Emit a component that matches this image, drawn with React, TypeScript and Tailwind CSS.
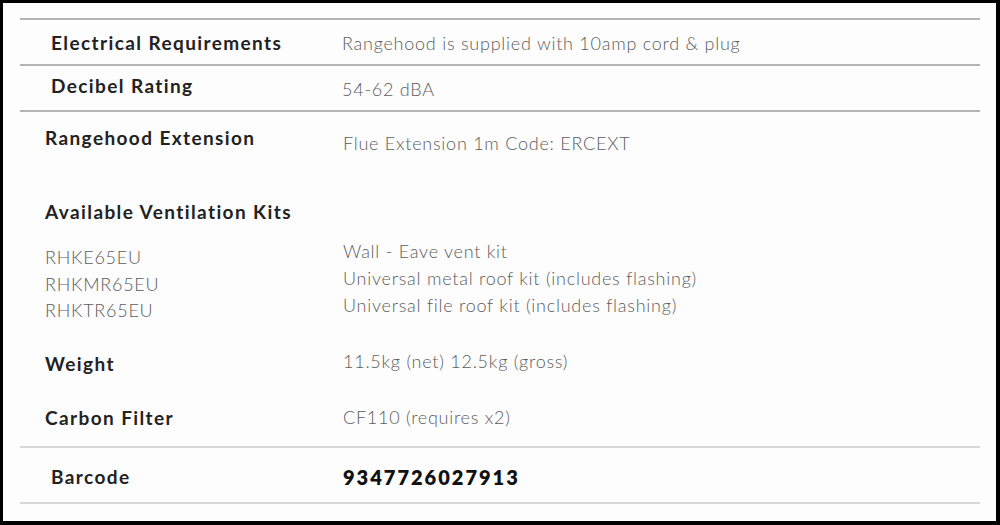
import React from "react";

const kits = [
  { code: "RHKE65EU", desc: "Wall - Eave vent kit" },
  { code: "RHKMR65EU", desc: "Universal metal roof kit (includes flashing)" },
  { code: "RHKTR65EU", desc: "Universal file roof kit (includes flashing)" },
];

const Label: React.FC<{ children: React.ReactNode; className?: string }> = ({ children, className = "" }) => (
  <span className={`shrink-0 text-[19px] leading-[24px] font-bold tracking-[1.4px] text-[#222] ${className}`}>{children}</span>
);

const Value: React.FC<{ children: React.ReactNode; className?: string }> = ({ children, className = "" }) => (
  <span className={`text-[18px] leading-[24px] font-light tracking-[0.75px] text-[#5c5c5c] ${className}`}>{children}</span>
);

export default function App() {
  return (
    <div className="w-[1000px] h-[525px] bg-black pl-[3px] pt-[3px] pr-[4px] pb-[4px]" style={{ fontFamily: "Lato, 'Liberation Sans', sans-serif" }}>
      <div className="h-full bg-[#fdfdfd] pt-[15px] pl-[17px] pr-[16px]">
        {/* Top bordered rows */}
        <div className="h-[2px] bg-[#b4b4b4]" />
        <div className="h-[44px] flex pt-[11px] pl-[31px]">
          <Label className="w-[291px]">Electrical Requirements</Label>
          <Value>Rangehood is supplied with 10amp cord &amp; plug</Value>
        </div>
        <div className="h-[2px] bg-[#b4b4b4]" />
        <div className="h-[44px] flex pt-[8px] pl-[31px]">
          <Label className="w-[291px]">Decibel Rating</Label>
          <Value className="mt-[3px]">54-62 dBA</Value>
        </div>
        <div className="h-[2px] bg-[#b4b4b4]" />

        {/* Open section */}
        <div className="h-[334px] pl-[25px] pt-[14px]">
          <div className="h-[24px] flex items-start">
            <Label className="w-[298px]">Rangehood Extension</Label>
            <Value className="mt-[5px]">Flue Extension 1m Code: ERCEXT</Value>
          </div>
          <div className="h-[24px] mt-[50px] flex items-start">
            <Label className="w-[298px]">Available Ventilation Kits</Label>
          </div>
          <div className="h-[81px] mt-[14px] flex items-start">
            <div className="w-[298px] shrink-0 mt-[6px] flex flex-col">
              {kits.map((k) => (
                <span key={k.code} className="text-[18px] leading-[26.5px] font-light tracking-[0.75px] text-[#5c5c5c]">{k.code}</span>
              ))}
            </div>
            <div className="flex flex-col">
              {kits.map((k) => (
                <span key={k.code} className="text-[18px] leading-[27px] font-light tracking-[0.75px] text-[#5c5c5c]">{k.desc}</span>
              ))}
            </div>
          </div>
          <div className="h-[24px] mt-[30px] flex items-start">
            <Label className="w-[298px] mt-[3px]">Weight</Label>
            <Value>11.5kg (net) 12.5kg (gross)</Value>
          </div>
          <div className="h-[24px] mt-[32px] flex items-start">
            <Label className="w-[298px] mt-[1px]">Carbon Filter</Label>
            <Value>CF110 (requires x2)</Value>
          </div>
        </div>

        {/* Bottom bordered row */}
        <div className="h-[2px] bg-[#d8d8d8]" />
        <div className="h-[54px] flex pt-[17px] pl-[31px]">
          <Label className="w-[292px]">Barcode</Label>
          <span className="text-[20px] leading-[24px] font-extrabold text-[#111] tracking-[2px]">9347726027913</span>
        </div>
        <div className="h-[2px] bg-[#d8d8d8]" />
      </div>
    </div>
  );
}
